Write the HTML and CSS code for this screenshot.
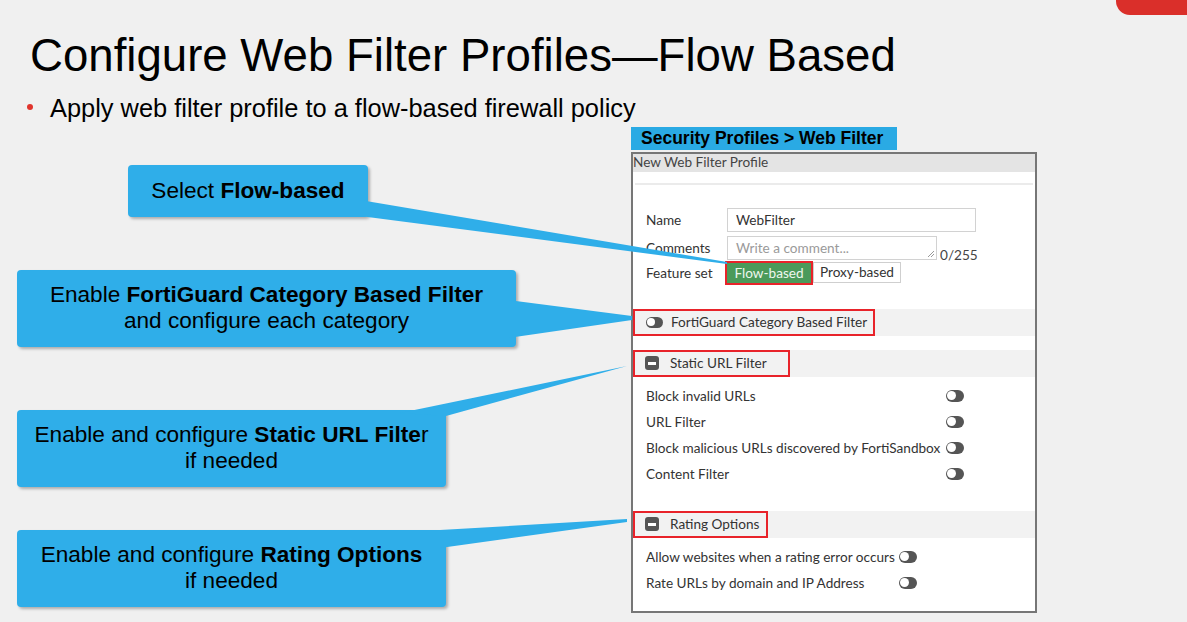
FILE: index.html
```html
<!DOCTYPE html>
<html lang="en">
<head>
<meta charset="utf-8">
<title>Configure Web Filter Profiles—Flow Based</title>
<link rel="stylesheet" href="styles.css">
</head>
<body>
<div class="slide">
  <div class="tab"></div>
  <h1 class="title">Configure Web Filter Profiles—Flow Based</h1>
  <ul class="bullets">
    <li><span class="dot"></span>Apply web filter profile to a flow-based firewall policy</li>
  </ul>
  <div class="body">
    <div class="callouts">
      <div class="callout c1"><p class="ctext">Select <b>Flow-based</b></p></div>
      <div class="callout c2"><p class="ctext">Enable <b>FortiGuard Category Based Filter</b><br>and configure each category</p></div>
      <div class="callout c3"><p class="ctext">Enable and configure <b>Static URL Filte</b>r<br>if needed</p></div>
      <div class="callout c4"><p class="ctext">Enable and configure <b>Rating Options</b><br>if needed</p></div>
    </div>
    <div class="shot">
      <div class="crumb">Security Profiles &gt; Web Filter</div>
      <div class="panel">
        <div class="ptitle">New Web Filter Profile</div>
        <div class="sep"></div>
        <div class="form">
          <div class="frow">
            <span class="flabel">Name</span>
            <div class="input">WebFilter</div>
          </div>
          <div class="frow">
            <span class="flabel">Comments</span>
            <div class="textarea">Write a comment...
              <svg class="grip" width="9" height="9" viewBox="0 0 9 9"><path d="M8 2 L2 8 M8 5 L5 8" stroke="#999" stroke-width="1" fill="none"/></svg>
            </div>
            <span class="count">0/255</span>
          </div>
          <div class="frow feat">
            <span class="flabel">Feature set</span>
            <div class="seg">
              <span class="hl-btn"><span class="btn on">Flow-based</span></span>
              <span class="btn">Proxy-based</span>
            </div>
          </div>
        </div>
        <div class="band band-fg">
          <div class="hl w-fg"><span class="toggle big"></span><span class="btext">FortiGuard Category Based Filter</span></div>
        </div>
        <div class="band band-static">
          <div class="hl w-static"><span class="minus"></span><span class="btext gap">Static URL Filter</span></div>
        </div>
        <div class="opts">
          <div class="orow"><span class="olabel wide">Block invalid URLs</span><span class="toggle"></span></div>
          <div class="orow"><span class="olabel wide">URL Filter</span><span class="toggle"></span></div>
          <div class="orow"><span class="olabel wide">Block malicious URLs discovered by FortiSandbox</span><span class="toggle"></span></div>
          <div class="orow"><span class="olabel wide">Content Filter</span><span class="toggle"></span></div>
        </div>
        <div class="band band-rating">
          <div class="hl w-rating"><span class="minus"></span><span class="btext gap">Rating Options</span></div>
        </div>
        <div class="opts">
          <div class="orow"><span class="olabel narrow">Allow websites when a rating error occurs</span><span class="toggle"></span></div>
          <div class="orow"><span class="olabel narrow">Rate URLs by domain and IP Address</span><span class="toggle"></span></div>
        </div>
      </div>
    </div>
  </div>
  <svg class="tails" width="1187" height="622" viewBox="0 0 1187 622">
    <polygon points="360,200 727,262 727,264 360,216"/>
    <polygon points="508,300 632,316 632,320 508,338"/>
    <polygon points="400,413 627,366 446,416"/>
    <polygon points="440,530 627,519 627,522 440,548"/>
  </svg>
</div>
</body>
</html>
```
FILE: styles.css
```css
html, body {
  margin: 0;
  padding: 0;
  background: #f0f0f0;
}

.slide {
  position: relative;
  width: 1187px;
  height: 622px;
  overflow: hidden;
  background: #f0f0f0;
  font-family: "Liberation Sans", Arial, sans-serif;
  color: #000;
}

.tab {
  position: absolute;
  top: 0;
  right: 0;
  width: 71px;
  height: 15px;
  background: #da2f2a;
  border-bottom-left-radius: 14px;
}

.title {
  margin: 33px 0 0 30px;
  font-size: 45.6px;
  line-height: 1;
  font-weight: normal;
  white-space: nowrap;
}

.bullets {
  list-style: none;
  margin: 14px 0 0 0;
  padding: 0;
}

.bullets li {
  display: flex;
  align-items: center;
  font-size: 25.4px;
  line-height: 30px;
  white-space: nowrap;
}

.dot {
  width: 6px;
  height: 6px;
  border-radius: 50%;
  background: #e0342c;
  margin: -2px 17px 0 27px;
  flex: none;
}

.body {
  display: flex;
  margin-top: 4px;
}

.callouts {
  width: 631px;
  display: flex;
  flex-direction: column;
  align-items: flex-start;
}

.callout {
  background: #2faee9;
  border-radius: 4px;
  box-shadow: 2px 2px 3px rgba(0, 0, 0, 0.28);
  display: flex;
  align-items: center;
  justify-content: center;
  box-sizing: border-box;
}

.ctext {
  margin: 0;
  text-align: center;
  font-size: 22.6px;
  line-height: 26px;
  white-space: nowrap;
}

.ctext b { font-weight: bold; }

.c1 { margin: 38px 0 0 128px; width: 240px; height: 52px; }
.c2 { margin: 53px 0 0 17px; width: 499px; height: 77px; }
.c3 { margin: 63px 0 0 17px; width: 429px; height: 77px; }
.c4 { margin: 43px 0 0 17px; width: 429px; height: 77px; }

.shot {
  display: flex;
  flex-direction: column;
  align-items: flex-start;
}

.crumb {
  width: 266px;
  height: 23px;
  box-sizing: border-box;
  padding-left: 10px;
  background: #2aaae4;
  font-weight: bold;
  font-size: 17.5px;
  line-height: 23px;
  white-space: nowrap;
}

.panel {
  margin-top: 2px;
  width: 406px;
  height: 461px;
  box-sizing: border-box;
  border: 2px solid #767676;
  background: #fff;
  font-family: Lato, "Liberation Sans", sans-serif;
  font-size: 13.6px;
  color: #333;
}

.ptitle {
  height: 18px;
  line-height: 16px;
  background: #e4e4e4;
  color: #444;
  white-space: nowrap;
}

.sep {
  margin: 11px 2px 0 2px;
  height: 2px;
  background: #ebebeb;
}

.form {
  padding: 23px 0 0 13px;
}

.frow {
  display: flex;
  align-items: center;
  margin-bottom: 4px;
}

.frow.feat { margin-top: -3px; }

.flabel {
  width: 81px;
  flex: none;
  white-space: nowrap;
}

.input, .textarea {
  box-sizing: border-box;
  height: 24px;
  border: 1px solid #d2d2d2;
  padding-left: 8px;
  line-height: 22px;
  white-space: nowrap;
}

.input { width: 249px; color: #333; }

.textarea {
  width: 210px;
  color: #9a9a9a;
  position: relative;
}

.grip {
  position: absolute;
  right: 1px;
  bottom: 1px;
}

.count {
  align-self: flex-end;
  margin: 0 0 -3px 3px;
  line-height: 16px;
  color: #444;
}

.seg {
  display: flex;
  align-items: center;
  margin-left: -2px;
}

.hl-btn {
  display: flex;
  border: 2px solid #e8232a;
  padding: 0;
}

.btn {
  box-sizing: border-box;
  height: 20px;
  line-height: 18px;
  padding: 0 4px;
  border: 1px solid #cfcfcf;
  background: #fff;
  color: #333;
  white-space: nowrap;
}

.btn.on {
  width: 84px;
  text-align: center;
  background: #4b9a5a;
  border-color: #4b9a5a;
  color: #eef6ef;
}

.seg > .btn { width: 88px; text-align: center; height: 21px; }

.band {
  height: 27px;
  background: #f2f2f2;
  display: flex;
}

.band-fg { margin-top: 24px; }
.band-static { margin-top: 14px; }
.band-rating { margin-top: 24px; }

.hl {
  box-sizing: border-box;
  height: 27px;
  border: 2px solid #e8232a;
  display: flex;
  align-items: center;
  padding-left: 11px;
  white-space: nowrap;
}

.w-fg { width: 242px; }
.w-static { width: 157px; padding-left: 10px; }
.w-rating { width: 135px; padding-left: 10px; }

.btext { margin-left: 8px; color: #333; }
.btext.gap { margin-left: 11px; }

.minus {
  width: 14px;
  height: 14px;
  border-radius: 3px;
  background: #555;
  display: flex;
  align-items: center;
  justify-content: center;
  flex: none;
}

.minus::after {
  content: "";
  width: 8px;
  height: 3px;
  background: #fff;
}

.toggle {
  width: 18px;
  height: 12px;
  border-radius: 6px;
  background: #555;
  display: flex;
  align-items: center;
  padding-left: 1px;
  box-sizing: border-box;
  flex: none;
}

.toggle::before {
  content: "";
  width: 9px;
  height: 9px;
  border-radius: 50%;
  background: #fff;
}

.toggle.big { width: 17px; height: 11px; }
.toggle.big::before { width: 8px; height: 8px; }

.opts {
  padding: 6px 0 0 13px;
}

.orow {
  height: 26px;
  display: flex;
  align-items: center;
}

.olabel { flex: none; white-space: nowrap; }
.olabel.wide { width: 300px; }
.olabel.narrow { width: 253px; }

.tails {
  position: absolute;
  top: 0;
  left: 0;
  pointer-events: none;
  fill: #2faee9;
}
```
